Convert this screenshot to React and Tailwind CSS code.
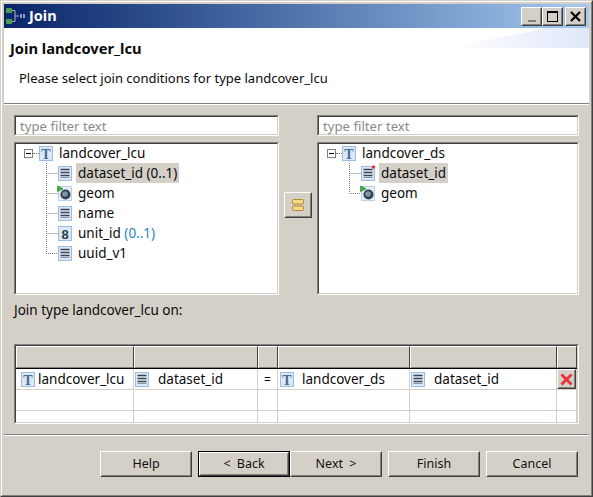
const FONT = "font-['Noto_Sans','Open_Sans',sans-serif]";

function TypeIcon() {
  return (
    <svg width="14" height="15" viewBox="0 0 14 15" className="shrink-0">
      <rect x="0.5" y="0.5" width="13" height="14" fill="#dce8f8" stroke="#9dbce4" />
      <text x="7" y="12.5" textAnchor="middle" fontFamily="Liberation Serif" fontWeight="700" fontSize="14" fill="#3f6f8f">T</text>
    </svg>
  );
}
function FieldIcon({ star }) {
  return (
    <svg width="14" height="15" viewBox="0 0 14 15" className="shrink-0 overflow-visible">
      <rect x="0.5" y="0.5" width="13" height="14" fill="#dce8f8" stroke="#9dbce4" />
      <path d="M2.5 3.5h9M2.5 6.5h9M2.5 9.5h9" stroke="#39444e" strokeWidth="1.3" />
      <path d="M2.5 11.5h9" stroke="#8a97a3" strokeWidth="1" />
      {star && <path d="M12 -1.5l.9 1.6 1.8-.4-1.2 1.4 1.2 1.4-1.8-.4-.9 1.6-.3-1.8-1.7-.8 1.7-.8z" fill="#e8202a" />}
    </svg>
  );
}
function GeomIcon() {
  return (
    <svg width="14" height="15" viewBox="0 0 14 15" className="shrink-0 overflow-visible">
      <rect x="0.5" y="0.5" width="13" height="14" fill="#e4edf8" stroke="#bcd0ea" />
      <circle cx="7.5" cy="8.5" r="5" fill="#2f4250" />
      <circle cx="7" cy="8" r="2.8" fill="#7f94a6" />
      <path d="M-0.5 0l5.5 2.8L-0.5 5.6z" fill="#3cb43c" stroke="#1c7c1c" strokeWidth="0.6" />
    </svg>
  );
}
function EightIcon() {
  return (
    <svg width="14" height="15" viewBox="0 0 14 15" className="shrink-0">
      <rect x="0.5" y="0.5" width="13" height="14" fill="#dce8f8" stroke="#9dbce4" />
      <text x="7" y="12.5" textAnchor="middle" fontFamily="Liberation Sans" fontWeight="700" fontSize="13" fill="#2b3a44">8</text>
    </svg>
  );
}
function Connector({ last }) {
  return (
    <svg width="13" height="20" viewBox="0 0 13 20" className="shrink-0">
      <path d={last ? "M1.5 0V10.5H13" : "M1.5 0V20M1.5 10.5H13"} stroke="#7a7a7a" strokeWidth="1" strokeDasharray="1 1" fill="none" />
    </svg>
  );
}
function Sunken({ className, children }) {
  return (
    <div className={"border border-t-[#808080] border-l-[#808080] border-r-white border-b-white " + className}>
      <div className="border border-t-[#404040] border-l-[#404040] border-r-[#d4d0c8] border-b-[#d4d0c8] bg-white h-full w-full overflow-hidden">
        {children}
      </div>
    </div>
  );
}
function Raised({ className, children, focus }) {
  return (
    <div className={(focus ? "border border-black " : "") + "flex " + className}>
      <div className="flex-1 border border-t-white border-l-white border-r-[#404040] border-b-[#404040] bg-[#d4d0c8]">
        <div className="h-full flex items-center justify-center border border-t-[#d4d0c8] border-l-[#d4d0c8] border-r-[#808080] border-b-[#808080] text-[12.5px] text-[#111]">
          {children}
        </div>
      </div>
    </div>
  );
}
function Filter({ className = "" }) {
  return (
    <Sunken className={"h-[21px] " + className}>
      <div className="pl-[4px] pt-[1px] text-[13.2px] leading-[17px] text-[#8a8a8a]">type filter text</div>
    </Sunken>
  );
}
function Root({ name }) {
  return (
    <div className="flex items-center h-[20px] pl-[8px] -mt-[1px]">
      <div className="w-[9px] h-[9px] border border-[#808080] flex items-center justify-center bg-white shrink-0">
        <div className="w-[5px] h-px bg-black" />
      </div>
      <div className="w-[6px] border-t border-dotted border-[#7a7a7a]" />
      <TypeIcon />
      <span className="ml-[6px] text-[13.5px]">{name}</span>
    </div>
  );
}
function Node({ icon, last, selected, children }) {
  return (
    <div className="flex items-center h-[20px] pl-[29px]">
      <Connector last={last} />
      {icon}
      <span className={"ml-[4px] px-[2px] h-[20px] flex items-center text-[13.5px] whitespace-pre " + (selected ? "bg-[#d4d0c8]" : "")}>{children}</span>
    </div>
  );
}
function HCell() {
  return (
    <div className="h-full border border-t-white border-l-white border-r-[#404040] border-b-[#808080] bg-[#d4d0c8]" />
  );
}
const COLS = "grid grid-cols-[118px_124px_20px_132px_147px_20px]";
function Cell({ children, className = "" }) {
  return <div className={"flex items-center border-r border-b border-[#d4d0c8] overflow-hidden text-[13.5px] whitespace-pre " + className}>{children}</div>;
}

export default function App() {
  return (
    <div className={"w-[593px] h-[497px] border border-t-[#d4d0c8] border-l-[#d4d0c8] border-r-[#404040] border-b-[#404040] text-[#0a0a0a] " + FONT}>
      <div className="h-full flex flex-col bg-[#d4d0c8] border border-t-white border-l-white border-r-[#808080] border-b-[#808080] p-[2px]">
        <div className="h-[24px] shrink-0 flex items-center bg-gradient-to-r from-[#0a246a] to-[#a6caf0]">
          <svg width="22" height="20" viewBox="0 0 22 20" className="ml-[1px] shrink-0">
            <rect x="1" y="2" width="6" height="5" fill="#4f9a4f" />
            <rect x="1" y="13" width="6" height="5" fill="#4f9a4f" />
            <path d="M7 4.5h3v11H7M10 10h4" stroke="#a8b0b8" fill="none" />
            <path d="M15 8h2v4h-2zM18 8h2v4h-2z" fill="#8e9cc0" />
          </svg>
          <span className="ml-[2px] text-white font-bold text-[14.5px]">Join</span>
          <div className="ml-auto flex items-center mr-[3px]">
            <Raised className="w-[21px] h-[19px]"><div className="w-[8px] h-[2px] bg-[#808080] mt-[10px]" /></Raised>
            <Raised className="w-[21px] h-[19px]"><div className="w-[11px] h-[11px] border border-black border-t-2" /></Raised>
            <Raised className="ml-[2px] w-[21px] h-[19px]">
              <svg width="11" height="11" viewBox="0 0 11 11"><path d="M1 1l9 9M10 1l-9 9" stroke="#000" strokeWidth="2.2" /></svg>
            </Raised>
          </div>
        </div>

        <div className="relative h-[75px] shrink-0 bg-white">
          <div className="absolute right-0 top-0 w-[140px] h-[20px] bg-gradient-to-r from-white to-[#dfe7f8] [clip-path:polygon(100%_0,100%_100%,0_100%,70%_0)]" />
          <div className="relative pl-[6px] pt-[8px] text-[14.7px] leading-[24px] font-bold">Join landcover_lcu</div>
          <div className="relative pl-[15px] pt-[8px] text-[13px] leading-[20px]">Please select join conditions for type landcover_lcu</div>
        </div>
        <div className="h-[2px] shrink-0 border-t border-t-[#808080] border-b border-b-white" />

        <div className="flex-1 flex flex-col px-[10px] pt-[10px]">
          <div className="flex h-[180px]">
            <div className="flex flex-col gap-[6px] w-[265px]">
              <Filter />
              <Sunken className="flex-1">
                <Root name="landcover_lcu" />
                <Node icon={<FieldIcon />} selected>dataset_id (0..1)</Node>
                <Node icon={<GeomIcon />}>geom</Node>
                <Node icon={<FieldIcon />}>name</Node>
                <Node icon={<EightIcon />}>unit_id <span className="text-[#1f87b8]">(0..1)</span></Node>
                <Node icon={<FieldIcon />} last>uuid_v1</Node>
              </Sunken>
            </div>
            <div className="w-[38px] flex items-start justify-center pt-[77px]">
              <Raised className="w-[28px] h-[26px]">
                <svg width="14" height="14" viewBox="0 0 14 14">
                  <rect x="1.5" y="1.5" width="11" height="4.5" rx="1" fill="#f3d98a" stroke="#b8862b" />
                  <rect x="1.5" y="8" width="11" height="4.5" rx="1" fill="#f3d98a" stroke="#b8862b" />
                </svg>
              </Raised>
            </div>
            <div className="flex flex-col gap-[6px] w-[262px]">
              <Filter />
              <Sunken className="flex-1">
                <Root name="landcover_ds" />
                <Node icon={<FieldIcon star />} selected>dataset_id</Node>
                <Node icon={<GeomIcon />} last>geom</Node>
              </Sunken>
            </div>
          </div>

          <div className="mt-[5px] h-[20px] leading-[20px] text-[13.5px]">Join type landcover_lcu on:</div>

          <Sunken className="mt-[24px] h-[80px] w-[565px]">
            <div className={COLS + " h-[23px] border-b border-b-black"}>
              <HCell /><HCell /><HCell /><HCell /><HCell /><HCell />
            </div>
            <div className={COLS + " h-[21px]"}>
              <Cell className="pl-[5px] gap-[3px]"><TypeIcon /><span className="pt-[1px]">landcover_lcu</span></Cell>
              <Cell className="pl-[1px]"><FieldIcon /><span className="ml-[9px] pt-[1px]">dataset_id</span></Cell>
              <Cell className="justify-center"><span className="pt-[2px] text-[12px]">=</span></Cell>
              <Cell className="pl-[2px]"><TypeIcon /><span className="ml-[8px] pt-[1px]">landcover_ds</span></Cell>
              <Cell className="pl-[1px]"><FieldIcon /><span className="ml-[9px] pt-[1px]">dataset_id</span></Cell>
              <Cell>
                <Raised className="w-[19px] h-[20px]">
                  <svg width="13" height="13" viewBox="0 0 13 13"><path d="M1.5 1.5l10 10M11.5 1.5l-10 10" stroke="#e8343a" strokeWidth="3" /></svg>
                </Raised>
              </Cell>
            </div>
            {[21, 12].map((h, i) => (
              <div key={i} className={COLS} style={{ height: h }}>
                <Cell /><Cell /><Cell /><Cell /><Cell /><Cell />
              </div>
            ))}
          </Sunken>
        </div>

        <div className="h-[2px] shrink-0 border-t border-t-[#808080] border-b border-b-white" />
        <div className="h-[57px] shrink-0 flex items-start pt-[15px] pl-[96px]">
          <Raised className="w-[92px] h-[26px]">Help</Raised>
          <Raised className="ml-[6px] w-[92px] h-[26px]" focus><span className="[word-spacing:3px]">&lt; Back</span></Raised>
          <Raised className="w-[92px] h-[26px]"><span className="[word-spacing:3px]">Next &gt;</span></Raised>
          <Raised className="ml-[6px] w-[92px] h-[26px]">Finish</Raised>
          <Raised className="ml-[6px] w-[92px] h-[26px]">Cancel</Raised>
        </div>
      </div>
    </div>
  );
}
